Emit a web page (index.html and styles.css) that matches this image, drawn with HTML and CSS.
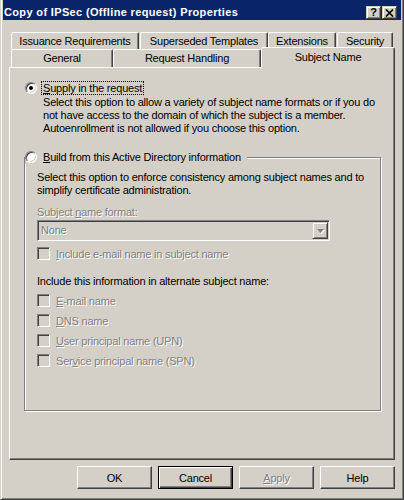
FILE: index.html
```html
<!DOCTYPE html>
<html>
<head>
    <meta charset="utf-8">
    <title>Copy of IPSec (Offline request) Properties</title>
    <link rel="stylesheet" href="styles.css">
</head>
<body>
<div class="window">
    <div class="titlebar">
        <span class="title">Copy of IPSec (Offline request) Properties</span>
        <span class="cap-btn help">?</span>
        <span class="cap-btn close">
            <svg width="9" height="8" viewBox="0 0 9 8"><path d="M1 0.5 L8 7.5 M8 0.5 L1 7.5" stroke="#000" stroke-width="1.6" fill="none"/></svg>
        </span>
    </div>

    <div class="tabs">
        <div class="tab-row back">
            <span class="tab t-iss">Issuance Requirements</span>
            <span class="tab t-sup">Superseded Templates</span>
            <span class="tab t-ext">Extensions</span>
            <span class="tab t-sec">Security</span>
        </div>
        <div class="tab-row front">
            <span class="tab t-gen">General</span>
            <span class="tab t-req">Request Handling</span>
            <span class="tab t-subj selected">Subject Name</span>
        </div>
    </div>

    <div class="panel">
        <div class="option">
            <span class="radio checked"></span>
            <span class="label focus"><u>S</u>upply in the request</span>
        </div>
        <p class="desc">Select this option to allow a variety of subject name formats or if you do<br>not have access to the domain of which the subject is a member.<br>Autoenrollment is not allowed if you choose this option.</p>

        <fieldset class="group">
            <legend class="option">
                <span class="radio"></span>
                <span class="label"><u>B</u>uild from this Active Directory information</span>
            </legend>
            <div class="group-body">
                <p class="note">Select this option to enforce consistency among subject names and to<br>simplify certificate administration.</p>
                <div class="field-label off">Subject <u>n</u>ame format:</div>
                <div class="combo">
                    <span class="combo-text off">None</span>
                    <span class="combo-btn">
                        <svg width="14" height="15" viewBox="0 0 14 15"><path d="M4 6 h7 l-3.5 4 z" fill="#fff" transform="translate(1 1)"/><path d="M4 6 h7 l-3.5 4 z" fill="#808080"/></svg>
                    </span>
                </div>
                <div class="check first-check"><span class="box"></span><span class="off"><u>I</u>nclude e-mail name in subject name</span></div>

                <p class="note alt">Include this information in alternate subject name:</p>
                <div class="check first-alt"><span class="box"></span><span class="off"><u>E</u>-mail name</span></div>
                <div class="check"><span class="box"></span><span class="off"><u>D</u>NS name</span></div>
                <div class="check"><span class="box"></span><span class="off"><u>U</u>ser principal name (UPN)</span></div>
                <div class="check"><span class="box"></span><span class="off">Ser<u>v</u>ice principal name (SPN)</span></div>
            </div>
        </fieldset>
    </div>

    <div class="buttons">
        <button class="btn">OK</button>
        <button class="btn default">Cancel</button>
        <button class="btn off" disabled><u>A</u>pply</button>
        <button class="btn">Help</button>
    </div>
</div>
</body>
</html>
```

FILE: styles.css
```css
*{ margin:0; padding:0; box-sizing:border-box }
html, body{ height:100% }
body{
    background:#d4d0c8;
    font:11px "Liberation Sans", Arial, sans-serif;
    letter-spacing:-0.2px;
    color:#000;
}
u{ text-decoration:underline; text-underline-offset:1px }

/* window frame */
.window{
    width:404px; height:500px;
    border:1px solid; border-top:0;
    border-color:#d4d0c8 #404040 #404040 #d4d0c8;
    box-shadow:inset 1px 0 #fff, inset -1px -1px #808080;
    padding:0 2px 2px 2px;
    background:#d4d0c8;
}

/* caption */
.titlebar{
    height:20px;
    background:#0a246a;
    display:flex; align-items:flex-start;
    padding:0 4px 0 1px;
}
.title{
    flex:1;
    margin-top:5px;
    line-height:14px;
    color:#fff; font-weight:bold;
    letter-spacing:0.35px;
    white-space:nowrap;
}
.cap-btn{
    width:15px; height:13px;
    margin-top:6px;
    background:#d4d0c8;
    border:1px solid; border-color:#d4d0c8 #404040 #404040 #d4d0c8;
    box-shadow:inset 1px 1px #fff, inset -1px -1px #808080;
    display:flex; align-items:center; justify-content:center;
    font-weight:bold; font-size:11px; line-height:11px; letter-spacing:0;
}
.close{ margin-left:1px }
.close svg{ display:block }

/* tabs */
.tabs{ margin:12px 6px 0 6px }
.tab-row{ display:flex; align-items:flex-end }
.tab-row.back{ height:17px }
.tab-row.front{ height:18px }
.tab{
    display:block;
    height:100%;
    border:1px solid; border-bottom:0;
    border-color:#fff #404040 transparent #fff;
    border-radius:2px 2px 0 0;
    box-shadow:inset -1px 0 #808080;
    background:#d4d0c8;
    text-align:center;
    white-space:nowrap;
}
.back .tab{ padding-top:2px; line-height:13px }
.front .tab{ padding-top:1px; line-height:14px }
.t-iss{ width:128px; margin-left:2px }
.t-sup{ width:128px; margin-left:1px }
.t-ext{ width:68px }
.t-sec{ width:56px; margin-left:1px }
.t-gen{ width:102px; margin-left:2px }
.t-req{ width:148px }
.front .tab.selected{
    width:134px; height:21px;
    margin-bottom:-1px;
    padding-top:2px;
    position:relative; z-index:1;
}

/* page */
.panel{
    margin:0 6px;
    height:393px;
    border:1px solid; border-color:#fff #404040 #404040 #fff;
    box-shadow:inset -1px -1px #808080;
    padding:13px 0 0 15px;
}
.option{
    display:flex; align-items:center;
    height:14px;
}
.radio{
    width:12px; height:12px;
    border-radius:50%;
    border:1px solid; border-color:#808080 #fff #fff #808080;
    box-shadow:inset 1px 1px #404040, inset -1px -1px #d4d0c8;
    background:#fff;
    display:flex; align-items:center; justify-content:center;
}
.radio.checked::after{
    content:""; width:4px; height:4px;
    border-radius:50%; background:#000;
}
.label{
    margin-left:4px;
    padding:0 1px;
    line-height:12px;
    border:1px solid transparent;
    white-space:nowrap;
}
.label.focus{ border:1px dotted #000 }
.desc{
    margin:1px 0 0 18px;
    line-height:13px;
    white-space:nowrap;
}

/* group box */
.group{
    margin:15px 0 0 -1px;
    width:357px;
    border:1px solid #808080;
    box-shadow:1px 1px #fff, inset 1px 1px #fff;
    padding:0;
}
.group legend{
    padding:0 4px 0 0;
    margin-left:0;
    background:#d4d0c8;
}
.group-body{ padding:0 0 43px 12px }
.note{
    margin-top:7px;
    line-height:13px;
    white-space:nowrap;
}
.note.alt{ margin-top:15px }
.field-label{ margin-top:9px; line-height:13px }
.off{ color:#808080; text-shadow:1px 1px 0 #fff }

.combo{
    margin-top:1px;
    width:293px; height:21px;
    border:1px solid; border-color:#808080 #fff #fff #808080;
    box-shadow:inset 1px 1px #404040, inset -1px -1px #d4d0c8;
    padding:1px;
    display:flex; align-items:center;
}
.combo-text{ flex:1; padding-left:2px; line-height:13px }
.combo-btn{
    width:16px; height:17px;
    border:1px solid; border-color:#d4d0c8 #404040 #404040 #d4d0c8;
    box-shadow:inset 1px 1px #fff, inset -1px -1px #808080;
    display:flex; align-items:center; justify-content:center;
}
.combo-btn svg{ display:block }

.check{
    display:flex; align-items:center;
    height:13px;
    margin-top:7px;
    white-space:nowrap;
}
.check.first-check{ margin-top:6px }
.check.first-alt{ margin-top:6px }
.box{
    width:13px; height:13px;
    margin-right:6px;
    border:1px solid; border-color:#808080 #fff #fff #808080;
    box-shadow:inset 1px 1px #404040, inset -1px -1px #d4d0c8;
    background:#d4d0c8;
}

/* dialog buttons */
.buttons{
    display:flex; justify-content:flex-end;
    gap:6px;
    margin:6px 6px 0 0;
}
.btn{
    width:75px; height:23px;
    font:inherit; letter-spacing:inherit; color:#000;
    background:#d4d0c8;
    border:1px solid; border-color:#fff #404040 #404040 #fff;
    box-shadow:inset -1px -1px #808080;
    padding:0;
}
.btn.default{
    border:1px solid #000;
    box-shadow:inset 1px 1px #fff, inset -1px -1px #404040, inset -2px -2px #808080;
}
.btn.off{ color:#808080; text-shadow:1px 1px 0 #fff }
```
